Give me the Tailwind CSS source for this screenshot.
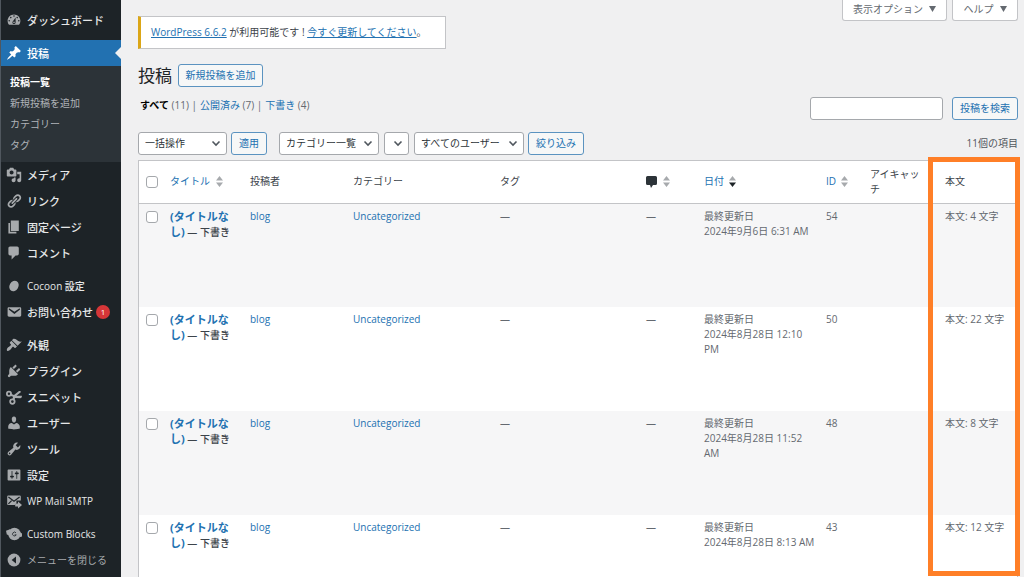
<!DOCTYPE html>
<html lang="ja">
<head>
<meta charset="utf-8">
<meta name="viewport" content="width=device-width, initial-scale=1">
<title>投稿 - WordPress</title>
<script src="https://cdn.jsdelivr.net/npm/@tailwindcss/browser@4"></script>
</head>
<body class="flex h-screen overflow-hidden bg-[#f0f0f1] font-['Open_Sans','Noto_Sans_CJK_JP',sans-serif] text-[10px] leading-[15px] text-[#646970]">

<nav aria-label="メインメニュー" class="w-[121px] shrink-0 border-l border-[#50575e] bg-[#1d2327] pt-[7px] text-[11px] font-medium text-[#e6e7e8]">
  <a href="#" class="flex h-[26px] items-center gap-[5px] pl-[5px]">
    <svg class="size-4 shrink-0 fill-[#a7aaad]" viewBox="0 0 20 20"><path d="M3.76 16h12.48c1.1-1.37 1.76-3.11 1.76-5 0-4.42-3.58-8-8-8s-8 3.58-8 8c0 1.89.66 3.63 1.76 5zM10 4c.55 0 1 .45 1 1s-.45 1-1 1-1-.45-1-1 .45-1 1-1zM6 6c.55 0 1 .45 1 1s-.45 1-1 1-1-.45-1-1 .45-1 1-1zm8 0c.55 0 1 .45 1 1s-.45 1-1 1-1-.45-1-1 .45-1 1-1zm-5.37 5.55L12 7v6c0 1.1-.9 2-2 2s-2-.9-2-2c0-.57.24-1.08.63-1.45zM4 10c.55 0 1 .45 1 1s-.45 1-1 1-1-.45-1-1 .45-1 1-1zm12 0c.55 0 1 .45 1 1s-.45 1-1 1-1-.45-1-1 .45-1 1-1zm-5 3c0-.55-.45-1-1-1s-1 .45-1 1 .45 1 1 1 1-.45 1-1z"/></svg>
    <span>ダッシュボード</span></a>
  <a href="#" aria-current="page" class="relative mt-[7px] flex h-[26px] items-center gap-[5px] bg-[#2271b1] pl-[5px] text-white">
    <svg class="size-4 shrink-0 fill-white" viewBox="0 0 20 20"><path d="M10.44 3.02l1.82-1.82 6.36 6.35-1.83 1.82c-1.05-.68-2.48-.57-3.41.36l-.75.75c-.92.93-1.04 2.35-.35 3.41l-1.83 1.82-2.41-2.41-2.8 2.79c-.42.42-3.38 2.71-3.8 2.29s1.86-3.39 2.28-3.81l2.79-2.79L4.1 9.36l1.83-1.82c1.05.69 2.48.57 3.4-.36l.75-.75c.93-.92 1.05-2.35.36-3.41z"/></svg>
    <span>投稿</span>
    <svg class="absolute right-0 h-3 w-[6px] fill-[#f0f0f1]" viewBox="0 0 6 12"><path d="M6 0v12L0 6z"/></svg></a>
  <div class="flex flex-col bg-[#2c3338] py-[6px] pl-[9px] text-[10px] font-normal leading-[21px] text-[#b0b4b9]">
    <a href="#" class="font-bold text-white">投稿一覧</a>
    <a href="#">新規投稿を追加</a>
    <a href="#">カテゴリー</a>
    <a href="#">タグ</a>
  </div>
  <a href="#" class="flex h-[26px] items-center gap-[5px] pl-[5px]">
    <svg class="size-4 shrink-0 fill-[#a7aaad]" viewBox="0 0 20 20"><path d="M13 11V4c0-.55-.45-1-1-1h-1.67L9 1H5L3.67 3H2c-.55 0-1 .45-1 1v7c0 .55.45 1 1 1h10c.55 0 1-.45 1-1zM7 4.5c1.38 0 2.5 1.12 2.5 2.5S8.38 9.5 7 9.5 4.5 8.38 4.5 7 5.62 4.5 7 4.5zM14 6h5v10.500c0 1.380-1.120 2.500-2.500 2.500S14 17.880 14 16.500s1.120-2.500 2.500-2.500c.17 0 .34.02.5.05V9h-3V6zm-4 8.050V13h2v3.500c0 1.380-1.120 2.500-2.500 2.500S7 17.880 7 16.500 8.120 14 9.500 14c.17 0 .34.02.5.05z"/></svg>
    <span>メディア</span></a>
  <a href="#" class="flex h-[26px] items-center gap-[5px] pl-[5px]">
    <svg class="size-4 shrink-0 fill-[#a7aaad]" viewBox="0 0 20 20"><path d="M17.74 2.760c1.680 1.690 1.680 4.410 0 6.100l-1.530 1.520c-1.120 1.120-2.700 1.470-4.140 1.090l2.620-2.610.76-.77.76-.76c.84-.84.84-2.200 0-3.040-.84-.85-2.200-.85-3.040 0l-.77.76-3.380 3.380c-.37-1.440-.02-3.020 1.100-4.140l1.520-1.530c1.690-1.680 4.420-1.680 6.100 0zM8.590 13.430l5.340-5.340c.42-.42.42-1.100 0-1.520-.44-.43-1.130-.39-1.530 0l-5.330 5.340c-.42.42-.42 1.100 0 1.520.44.43 1.130.39 1.520 0zm-.76 2.290l4.140-4.150c.38 1.440.03 3.020-1.090 4.140l-1.520 1.530c-1.690 1.680-4.410 1.680-6.100 0-1.680-1.680-1.680-4.420 0-6.100l1.530-1.520c1.120-1.120 2.700-1.470 4.140-1.100l-4.140 4.150c-.85.84-.85 2.200 0 3.050.84.84 2.200.84 3.040 0z"/></svg>
    <span>リンク</span></a>
  <a href="#" class="flex h-[26px] items-center gap-[5px] pl-[5px]">
    <svg class="size-4 shrink-0 fill-[#a7aaad]" viewBox="0 0 20 20"><path d="M6 15V2h10v13H6zm-1 1h8v2H3V5h2v11z"/></svg>
    <span>固定ページ</span></a>
  <a href="#" class="flex h-[26px] items-center gap-[5px] pl-[5px]">
    <svg class="size-4 shrink-0 fill-[#a7aaad]" viewBox="0 0 20 20"><path d="M5 2h9c1.100 0 2 .9 2 2v7c0 1.100-.9 2-2 2h-2l-5 5v-5H5c-1.100 0-2-.9-2-2V4c0-1.100.9-2 2-2z"/></svg>
    <span>コメント</span></a>
  <a href="#" class="mt-[7px] flex h-[26px] items-center gap-[5px] pl-[5px]">
    <svg class="size-4 shrink-0 fill-[#a7aaad]" viewBox="0 0 20 20"><ellipse cx="10" cy="10" rx="5.500" ry="7" transform="rotate(30 10 10)"/></svg>
    <span class="text-[10px]">Cocoon 設定</span></a>
  <a href="#" class="flex h-[26px] items-center gap-[5px] pl-[5px]">
    <svg class="size-4 shrink-0 fill-[#a7aaad]" viewBox="0 0 20 20"><path d="M3.870 4h13.250C18.370 4 19 4.590 19 5.790v8.420c0 1.190-.63 1.790-1.880 1.790H3.870c-1.250 0-1.880-.6-1.880-1.790V5.790c0-1.200.63-1.790 1.880-1.790zm6.620 8.600l6.740-5.530c.24-.2.43-.66.13-1.070-.29-.41-.82-.42-1.170-.17l-5.700 3.860L4.800 5.830c-.35-.25-.88-.24-1.170.17-.3.41-.11.87.13 1.070z"/></svg>
    <span class="whitespace-nowrap">お問い合わせ</span>
    <span class="-ml-[2px] flex size-[14px] shrink-0 items-center justify-center rounded-full bg-[#d63638] text-[8px] leading-none text-white">1</span></a>
  <a href="#" class="mt-[7px] flex h-[26px] items-center gap-[5px] pl-[5px]">
    <svg class="size-4 shrink-0 fill-[#a7aaad]" viewBox="0 0 20 20"><path d="M14.480 11.060L7.410 3.990l1.500-1.500c.5-.56 2.300-.47 3.510.32 1.210.8 1.430 1.280 2.910 2.100 1.180.64 2.450 1.260 4.450.85zm-.71.71L6.700 4.700 4.930 6.470c-.39.39-.39 1.020 0 1.410l1.060 1.060c.39.39.39 1.030 0 1.420-.6.6-1.430 1.110-2.210 1.690-.35.26-.7.53-1.010.84C1.430 14.230.4 16.080 1.400 17.070c.99 1 2.840-.03 4.180-1.360.31-.31.58-.66.85-1.020.57-.78 1.080-1.610 1.690-2.210.39-.39 1.020-.39 1.410 0l1.060 1.060c.39.39 1.020.39 1.410 0z"/></svg>
    <span>外観</span></a>
  <a href="#" class="flex h-[26px] items-center gap-[5px] pl-[5px]">
    <svg class="size-4 shrink-0 fill-[#a7aaad]" viewBox="0 0 20 20"><path d="M13.110 4.360L9.870 7.600 8 5.730l3.240-3.240c.35-.34 1.050-.2 1.560.32.52.51.66 1.210.31 1.550zm-8 1.770l.91-1.120 9.010 9.010-1.190.84c-.71.71-2.630 1.160-3.820 1.160H6.140L4.900 17.260c-.59.59-1.540.59-2.120 0-.59-.58-.59-1.530 0-2.120l1.240-1.240v-3.880c0-1.130.4-3.190 1.090-3.890zm7.260 3.970l3.240-3.240c.34-.35 1.040-.21 1.550.31.52.51.66 1.210.31 1.550l-3.240 3.250z"/></svg>
    <span>プラグイン</span></a>
  <a href="#" class="flex h-[26px] items-center gap-[5px] pl-[5px]">
    <svg class="size-4 shrink-0 fill-[#a7aaad]" viewBox="0 0 20 20"><g fill="none" stroke="#a7aaad" stroke-width="2.200"><circle cx="3.700" cy="6" r="2.600"/><circle cx="8" cy="15.700" r="2.800"/></g><path d="M5.500 5.500l4.500 2L15.500 3c1.200-.9 3-.4 3.300.9L13 8.500l6.800-.1c.4 1.900-.6 3.200-2 3.200l-6.300-.5-1.500 3-2-1.400.8-2.900L4.500 8z"/></svg>
    <span>スニペット</span></a>
  <a href="#" class="flex h-[26px] items-center gap-[5px] pl-[5px]">
    <svg class="size-4 shrink-0 fill-[#a7aaad]" viewBox="0 0 20 20"><path d="M10 9.250c-2.270 0-2.730-3.440-2.730-3.440C7 4.020 7.820 2 9.970 2c2.160 0 2.980 2.020 2.710 3.810 0 0-.41 3.440-2.680 3.440zm0 2.570L12.720 10c2.390 0 4.520 2.330 4.520 4.530v2.490s-3.650 1.130-7.240 1.130c-3.650 0-7.240-1.130-7.240-1.130v-2.490c0-2.250 1.940-4.480 4.470-4.480z"/></svg>
    <span>ユーザー</span></a>
  <a href="#" class="flex h-[26px] items-center gap-[5px] pl-[5px]">
    <svg class="size-4 shrink-0 fill-[#a7aaad]" viewBox="0 0 20 20"><path d="M16.680 9.770c-1.340 1.340-3.300 1.670-4.950.99l-5.410 6.520c-.99.99-2.590.99-3.580 0s-.99-2.590 0-3.570l6.520-5.420c-.68-1.650-.35-3.610.99-4.950 1.280-1.280 3.120-1.620 4.720-1.060l-2.890 2.890 2.820 2.820 2.860-2.870c.53 1.580.18 3.390-1.080 4.650zM3.810 16.210c.4.39 1.040.39 1.430 0 .4-.4.4-1.040 0-1.430-.39-.4-1.030-.4-1.430 0-.39.39-.39 1.030 0 1.430z"/></svg>
    <span>ツール</span></a>
  <a href="#" class="flex h-[26px] items-center gap-[5px] pl-[5px]">
    <svg class="size-4 shrink-0 fill-[#a7aaad]" viewBox="0 0 20 20"><path d="M18 16V4c0-.55-.45-1-1-1H3c-.55 0-1 .45-1 1v12c0 .55.45 1 1 1h14c.55 0 1-.45 1-1zM8 11h1c.55 0 1 .45 1 1s-.45 1-1 1H8v1.500c0 .28-.22.5-.5.5s-.5-.22-.5-.5V13H6c-.55 0-1-.45-1-1s.45-1 1-1h1V5.500c0-.28.22-.5.5-.5s.5.22.5.5V11zm5-2h-1c-.55 0-1-.45-1-1s.45-1 1-1h1V5.500c0-.28.22-.5.5-.5s.5.22.5.5V7h1c.55 0 1 .45 1 1s-.45 1-1 1h-1v5.500c0 .28-.22.5-.5.5s-.5-.22-.5-.5V9z"/></svg>
    <span>設定</span></a>
  <a href="#" class="flex h-[26px] items-center gap-[5px] pl-[5px]">
    <svg class="size-4 shrink-0 fill-[#a7aaad]" viewBox="0 0 20 20"><path d="M3 3h14c.8 0 1.500.6 1.500 1.400v5.100L13 9.500v3L11 15H3c-.8 0-1.500-.6-1.500-1.400V4.400C1.500 3.600 2.200 3 3 3z"/><path d="M3 5l7 5.200L17 5M3 13.500l4-4" fill="none" stroke="#1d2327" stroke-width="1.500"/><path d="M11.500 13H15v-2.500l5 4.500-5 4.500V17h-3.500z"/></svg>
    <span class="whitespace-nowrap text-[10px]">WP Mail SMTP</span></a>
  <a href="#" class="mt-[7px] flex h-[26px] items-center gap-[5px] pl-[5px]">
    <svg class="size-4 shrink-0 fill-[#a7aaad]" viewBox="0 0 20 20"><circle cx="10.500" cy="10" r="7.800"/><path d="M0 6l5-2v8l-4-1.500zM20 9.500l-3-2v6.500l3-1z"/><path d="M12.500 8.600a2.400 2.400 0 1 0 .3 2.400H10.800" fill="none" stroke="#1d2327" stroke-width="1"/></svg>
    <span class="whitespace-nowrap text-[10px]">Custom Blocks</span></a>
  <button type="button" class="flex h-[26px] w-full items-center gap-[5px] pl-[5px] text-[10px] font-normal text-[#a7aaad]">
    <svg class="size-4 shrink-0" viewBox="0 0 20 20"><circle cx="10" cy="10" r="8" fill="#a7aaad"/><path d="M12.500 5.500v9L7 10z" fill="#1d2327"/></svg>
    <span class="whitespace-nowrap">メニューを閉じる</span></button>
</nav>

<main class="flex min-w-0 flex-1 flex-col pl-[17px] pr-[6px]">
  <div class="flex items-start justify-between">
    <div class="mt-4 flex h-[33px] items-center border border-l-[3px] border-[#c3c4c7] border-l-[#dba617] bg-white pl-[10px] pr-[18px] text-[#3c434a]">
      <p><a href="#" class="text-[#2271b1] underline">WordPress 6.6.2</a> が利用可能です ! <a href="#" class="text-[#2271b1] underline">今すぐ更新してください</a>。</p>
    </div>
    <div class="flex gap-[5px] text-[#646970]">
      <button type="button" class="flex h-[21px] w-[105px] items-center justify-center gap-[6px] rounded-b-[3px] border border-t-0 border-[#c3c4c7] bg-white pb-[2px]">表示オプション <svg class="h-[6px] w-[7px] fill-current" viewBox="0 0 7 6"><path d="M0 0h7L3.500 6z"/></svg></button>
      <button type="button" class="flex h-[21px] w-[66px] items-center justify-center gap-[6px] rounded-b-[3px] border border-t-0 border-[#c3c4c7] bg-white pb-[2px]">ヘルプ <svg class="h-[6px] w-[7px] fill-current" viewBox="0 0 7 6"><path d="M0 0h7L3.500 6z"/></svg></button>
    </div>
  </div>

  <div class="mt-[15px] flex h-[23px] items-center gap-[6px]">
    <h1 class="text-[17px] leading-[23px] text-[#1d2327]">投稿</h1>
    <a href="#" class="flex h-[23px] w-[85px] items-center justify-center whitespace-nowrap rounded-[3px] border border-[#5b93c0] bg-[#f6f7f7] text-[#2271b1]">新規投稿を追加</a>
  </div>

  <div class="mt-[10px] flex items-start justify-between">
    <ul class="flex gap-[3px] pl-[2px] pt-px text-[#646970]">
      <li><a href="#" aria-current="page" class="font-bold text-black">すべて</a> (11) |</li>
      <li><a href="#" class="text-[#2271b1]">公開済み</a> (7) |</li>
      <li><a href="#" class="text-[#2271b1]">下書き</a> (4)</li>
    </ul>
    <form class="flex gap-[9px]">
      <input type="search" aria-label="投稿を検索" class="h-[23px] w-[133px] rounded-[3px] border border-[#a5a8ac] bg-white px-2">
      <button type="button" class="h-[23px] w-[66px] rounded-[3px] border border-[#5b93c0] bg-[#f6f7f7] text-[#2271b1]">投稿を検索</button>
    </form>
  </div>

  <div class="mt-3 flex items-center text-[#2c3338]">
    <div class="relative">
      <select aria-label="一括操作を選択" class="h-[23px] w-[89px] appearance-none rounded-[3px] border border-[#a5a8ac] bg-white pl-[6px]"><option>一括操作</option></select>
      <svg class="pointer-events-none absolute right-[6px] top-[8px] h-[7px] w-[10px]" viewBox="0 0 10 7"><path d="M1.500 1.500L5 5l3.500-3.500" fill="none" stroke="#50575e" stroke-width="1.600"/></svg>
    </div>
    <button type="button" class="ml-1 h-[23px] w-9 rounded-[3px] border border-[#5b93c0] bg-[#f6f7f7] text-[#2271b1]">適用</button>
    <div class="relative ml-3">
      <select aria-label="カテゴリーで絞り込む" class="h-[23px] w-[100px] appearance-none rounded-[3px] border border-[#a5a8ac] bg-white pl-[6px]"><option>カテゴリー一覧</option></select>
      <svg class="pointer-events-none absolute right-[6px] top-[8px] h-[7px] w-[10px]" viewBox="0 0 10 7"><path d="M1.500 1.500L5 5l3.500-3.500" fill="none" stroke="#50575e" stroke-width="1.600"/></svg>
    </div>
    <div class="relative ml-[5px]">
      <select aria-label="タグで絞り込む" class="h-[23px] w-[25px] appearance-none rounded-[3px] border border-[#a5a8ac] bg-white"><option></option></select>
      <svg class="pointer-events-none absolute right-[6px] top-[8px] h-[7px] w-[10px]" viewBox="0 0 10 7"><path d="M1.500 1.500L5 5l3.500-3.500" fill="none" stroke="#50575e" stroke-width="1.600"/></svg>
    </div>
    <div class="relative ml-[5px]">
      <select aria-label="ユーザーで絞り込む" class="h-[23px] w-[110px] appearance-none rounded-[3px] border border-[#a5a8ac] bg-white pl-[6px]"><option>すべてのユーザー</option></select>
      <svg class="pointer-events-none absolute right-[6px] top-[8px] h-[7px] w-[10px]" viewBox="0 0 10 7"><path d="M1.500 1.500L5 5l3.500-3.500" fill="none" stroke="#50575e" stroke-width="1.600"/></svg>
    </div>
    <button type="button" class="ml-1 h-[23px] w-14 rounded-[3px] border border-[#5b93c0] bg-[#f6f7f7] text-[#2271b1]">絞り込み</button>
    <span class="ml-auto text-[#50575e]">11個の項目</span>
  </div>

  <div class="relative mt-[5px] min-h-0 flex-1">
    <div class="h-full overflow-hidden border border-b-0 border-[#c3c4c7] bg-white">
      <table class="w-full table-fixed text-left">
        <colgroup>
          <col class="w-[24px]"><col class="w-[80px]"><col class="w-[103px]"><col class="w-[147px]"><col class="w-[146px]"><col class="w-[58px]"><col class="w-[122px]"><col class="w-[44px]"><col class="w-[75px]"><col class="w-[79px]">
        </colgroup>
        <thead class="text-[#3c434a]">
          <tr class="h-[42px] border-b border-[#c3c4c7] align-middle">
            <td class="pl-[7px]"><input type="checkbox" aria-label="すべて選択" class="block size-3 appearance-none rounded-[3px] border border-[#a5a8ac] bg-white"></td>
            <th class="px-[7px] font-normal"><a href="#" class="flex items-center gap-[6px] whitespace-nowrap text-[#2271b1]">タイトル<svg class="h-[11px] w-[7px] shrink-0 fill-[#a7aaad]" viewBox="0 0 7 11"><path d="M3.500 0L7 4.500H0zM3.500 11L0 6.500h7z"/></svg></a></th>
            <th class="px-[7px] font-normal">投稿者</th>
            <th class="px-[7px] font-normal">カテゴリー</th>
            <th class="px-[7px] font-normal">タグ</th>
            <th class="px-[7px] font-normal"><a href="#" aria-label="コメント" class="flex items-center gap-[6px]"><svg class="h-3 w-[11px] fill-[#2c3338]" viewBox="0 0 11 12"><path d="M1.500 0h8A1.500 1.500 0 0 1 11 1.500v6A1.500 1.500 0 0 1 9.500 9H7l-2 3-1-3H1.500A1.500 1.500 0 0 1 0 7.500v-6A1.500 1.500 0 0 1 1.500 0z"/></svg><svg class="h-[11px] w-[7px] fill-[#a7aaad]" viewBox="0 0 7 11"><path d="M3.500 0L7 4.500H0zM3.500 11L0 6.500h7z"/></svg></a></th>
            <th class="px-[7px] font-normal"><a href="#" class="flex items-center gap-[5px] text-[#2271b1]">日付<svg class="h-[11px] w-[7px]" viewBox="0 0 7 11"><path d="M3.500 0L7 4.500H0z" fill="#a7aaad"/><path d="M3.500 11L0 6.500h7z" fill="#1d2327"/></svg></a></th>
            <th class="px-[7px] font-normal"><a href="#" class="flex items-center gap-[5px] text-[#2271b1]">ID<svg class="h-[11px] w-[7px] fill-[#a7aaad]" viewBox="0 0 7 11"><path d="M3.500 0L7 4.500H0zM3.500 11L0 6.500h7z"/></svg></a></th>
            <th class="px-[7px] font-normal">アイキャッ<br>チ</th>
            <th class="px-[7px] font-normal">本文</th>
          </tr>
        </thead>
        <tbody class="align-top">
          <tr class="h-[104px] bg-[#f6f6f7]">
            <td class="pl-[7px] pt-[7px]"><input type="checkbox" aria-label="54 を選択" class="block size-3 appearance-none rounded-[3px] border border-[#a5a8ac] bg-white"></td>
            <td class="whitespace-nowrap px-[7px] pt-[5px] text-[11px] font-bold text-[#3c434a]"><a href="#" class="text-[#2271b1]">(タイトルな<br>し)</a><span class="text-[10px] font-medium"> — 下書き</span></td>
            <td class="px-[7px] pt-[5px]"><a href="#" class="text-[#2271b1]">blog</a></td>
            <td class="px-[7px] pt-[5px]"><a href="#" class="text-[#2271b1]">Uncategorized</a></td>
            <td class="px-[7px] pt-[5px]">—</td>
            <td class="px-[7px] pt-[5px]">—</td>
            <td class="whitespace-nowrap px-[7px] pt-[5px]">最終更新日<br>2024年9月6日 6:31 AM</td>
            <td class="px-[7px] pt-[5px]">54</td>
            <td></td>
            <td class="whitespace-nowrap px-[7px] pt-[5px]">本文: 4 文字</td>
          </tr>
          <tr class="h-[104px]">
            <td class="pl-[7px] pt-[7px]"><input type="checkbox" aria-label="50 を選択" class="block size-3 appearance-none rounded-[3px] border border-[#a5a8ac] bg-white"></td>
            <td class="whitespace-nowrap px-[7px] pt-[5px] text-[11px] font-bold text-[#3c434a]"><a href="#" class="text-[#2271b1]">(タイトルな<br>し)</a><span class="text-[10px] font-medium"> — 下書き</span></td>
            <td class="px-[7px] pt-[5px]"><a href="#" class="text-[#2271b1]">blog</a></td>
            <td class="px-[7px] pt-[5px]"><a href="#" class="text-[#2271b1]">Uncategorized</a></td>
            <td class="px-[7px] pt-[5px]">—</td>
            <td class="px-[7px] pt-[5px]">—</td>
            <td class="whitespace-nowrap px-[7px] pt-[5px]">最終更新日<br>2024年8月28日 12:10<br>PM</td>
            <td class="px-[7px] pt-[5px]">50</td>
            <td></td>
            <td class="whitespace-nowrap px-[7px] pt-[5px]">本文: 22 文字</td>
          </tr>
          <tr class="h-[104px] bg-[#f6f6f7]">
            <td class="pl-[7px] pt-[7px]"><input type="checkbox" aria-label="48 を選択" class="block size-3 appearance-none rounded-[3px] border border-[#a5a8ac] bg-white"></td>
            <td class="whitespace-nowrap px-[7px] pt-[5px] text-[11px] font-bold text-[#3c434a]"><a href="#" class="text-[#2271b1]">(タイトルな<br>し)</a><span class="text-[10px] font-medium"> — 下書き</span></td>
            <td class="px-[7px] pt-[5px]"><a href="#" class="text-[#2271b1]">blog</a></td>
            <td class="px-[7px] pt-[5px]"><a href="#" class="text-[#2271b1]">Uncategorized</a></td>
            <td class="px-[7px] pt-[5px]">—</td>
            <td class="px-[7px] pt-[5px]">—</td>
            <td class="whitespace-nowrap px-[7px] pt-[5px]">最終更新日<br>2024年8月28日 11:52<br>AM</td>
            <td class="px-[7px] pt-[5px]">48</td>
            <td></td>
            <td class="whitespace-nowrap px-[7px] pt-[5px]">本文: 8 文字</td>
          </tr>
          <tr class="h-[104px]">
            <td class="pl-[7px] pt-[7px]"><input type="checkbox" aria-label="43 を選択" class="block size-3 appearance-none rounded-[3px] border border-[#a5a8ac] bg-white"></td>
            <td class="whitespace-nowrap px-[7px] pt-[5px] text-[11px] font-bold text-[#3c434a]"><a href="#" class="text-[#2271b1]">(タイトルな<br>し)</a><span class="text-[10px] font-medium"> — 下書き</span></td>
            <td class="px-[7px] pt-[5px]"><a href="#" class="text-[#2271b1]">blog</a></td>
            <td class="px-[7px] pt-[5px]"><a href="#" class="text-[#2271b1]">Uncategorized</a></td>
            <td class="px-[7px] pt-[5px]">—</td>
            <td class="px-[7px] pt-[5px]">—</td>
            <td class="whitespace-nowrap px-[7px] pt-[5px]">最終更新日<br>2024年8月28日 8:13 AM</td>
            <td class="px-[7px] pt-[5px]">43</td>
            <td></td>
            <td class="whitespace-nowrap px-[7px] pt-[5px]">本文: 12 文字</td>
          </tr>
        </tbody>
      </table>
    </div>
    <div class="pointer-events-none absolute -right-[2px] -top-[3px] bottom-px w-[92px] border-[5px] border-[#ff7f27]"></div>
  </div>
</main>
</body>
</html>
